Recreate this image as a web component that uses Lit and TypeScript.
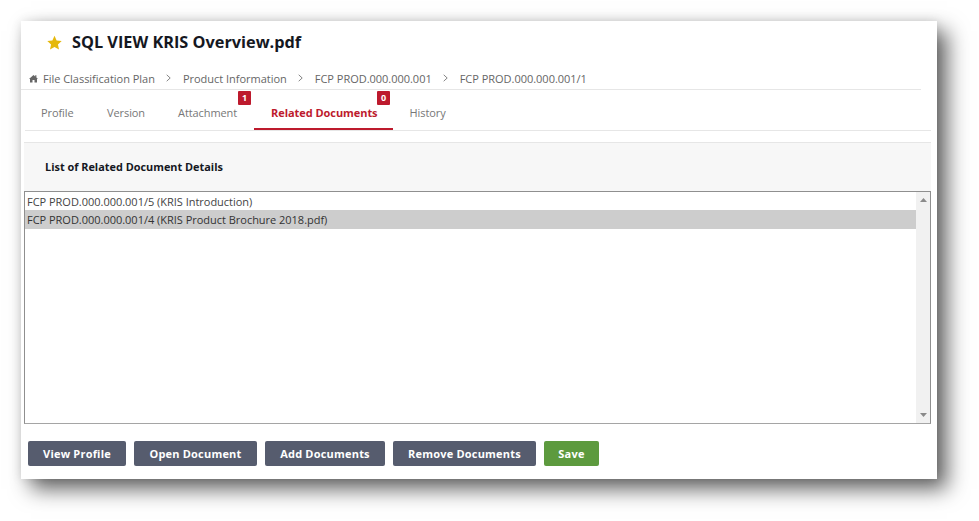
import { LitElement, html, css } from "lit";
import { customElement } from "lit/decorators.js";

@customElement("app-root")
export class AppRoot extends LitElement {
  static styles = css`
    :host { display: block; width: 979px; height: 521px; padding: 21px 0 0 21px; box-sizing: border-box; background: #fff; font-family: "Open Sans", "Noto Sans", sans-serif; overflow: hidden; }
    .card { width: 916px; height: 458px; background: #fff; box-shadow: 10px 10px 20px rgba(0,0,0,.62), 0 0 10px rgba(0,0,0,.1); display: flex; flex-direction: column; }
    .title { display: flex; align-items: center; height: 42px; padding-left: 26px; gap: 10px; }
    .star { width: 15px; height: 15px; display: block; margin-top: 1px; }
    h1 { margin: 0; font-size: 16.3px; line-height: 22px; font-weight: 700; color: #15181f; }
    .crumbs { display: flex; align-items: center; height: 27px; box-sizing: border-box; padding: 4px 0 0 8px; width: 900px; border-bottom: 1px solid #e6e6e6; font-size: 11px; letter-spacing: -.02px; color: #666; }
    .home { width: 9px; height: 9px; margin-right: 5px; }
    .sep { width: 5px; height: 8px; margin: 0 12px 0 11px; }
    .tabs { display: flex; margin: 0 0 0 4px; width: 906px; height: 41px; border-bottom: 1px solid #e6e6e6; box-sizing: border-box; font-size: 11px; letter-spacing: -.09px; }
    .tab { position: relative; padding: 15px 16.5px 0; color: #777; line-height: 16px; box-sizing: border-box; height: 40px; }
    .tab.first { padding: 15px 17px 0 16px; }
    .tab.attach { padding-right: 17px; }
    .tab.active { color: #bd1a2d; font-weight: 700; letter-spacing: -.06px; border-bottom: 2px solid #bd1a2d; padding: 15px 15.5px 0 17px; }
    .badge { position: absolute; top: 1px; right: 3px; width: 13px; height: 14px; border-radius: 1px; background: #bd1a2d; color: #fff; font-size: 9px; font-weight: 700; line-height: 14px; text-align: center; letter-spacing: 0; }
    .panel { margin: 11px 6px 0 3px; height: 49px; box-sizing: border-box; background: #f7f7f7; border-top: 1px solid #e6e6e6; padding: 16px 0 0 21px; font-size: 10.9px; line-height: 16px; font-weight: 700; color: #15181f; }
    .list { margin: 0 6px 0 3px; height: 233px; box-sizing: border-box; border: 1px solid #8f8f8f; border-bottom-color: #a5a5a5; padding-top: 1px; display: flex; font-size: 11px; letter-spacing: -.02px; color: #444; }
    .rows { flex: 1; }
    .row { height: 17px; line-height: 18px; padding-left: 2px; }
    .row.sel { height: 18.5px; line-height: 19px; background: #cdcdcd; color: #333; }
    .scroll { width: 14px; margin-top: -1px; background: #f1f1f1; display: flex; flex-direction: column; justify-content: space-between; align-items: center; padding: 6px 0; box-sizing: border-box; }
    .arrow { width: 7px; height: 4px; display: block; }
    .actions { display: flex; gap: 8px; padding: 17px 0 0 7px; }
    button { height: 25px; padding: 0; border: 0; border-radius: 2px; background: #565c6e; color: #fff; font: 700 11px/25px "Open Sans", "Noto Sans", sans-serif; letter-spacing: .2px; }
    button.save { background: #5d9a3e; }
    .w-view { width: 98px; }
    .w-open { width: 123px; }
    .w-add { width: 120px; }
    .w-remove { width: 143px; }
    .w-save { width: 55px; }
  `;

  private sep() {
    return html`<svg class="sep" viewBox="0 0 5 8"><path d="M.7.8 4.2 4 .7 7.2" fill="none" stroke="#777" stroke-width=".9"/></svg>`;
  }

  render() {
    return html`
      <div class="card">
        <div class="title">
          <svg class="star" viewBox="0 0 24 24"><path d="M12 1l3.4 7.6 8.1.9-6 5.6 1.7 8.1L12 19.1 4.8 23.2l1.7-8.1-6-5.6 8.1-.9z" fill="#e5b80b"/></svg>
          <h1>SQL VIEW KRIS Overview.pdf</h1>
        </div>
        <div class="crumbs">
          <svg class="home" viewBox="0 0 9 9"><path d="M4.5 1 6.2 2.5V1.2H7.4V3.6L9 5H8V8.6H5.5V6H3.5V8.6H1V5H0z" fill="#666"/></svg>
          <span>File Classification Plan</span>${this.sep()}
          <span>Product Information</span>${this.sep()}
          <span>FCP PROD.000.000.001</span>${this.sep()}
          <span>FCP PROD.000.000.001/1</span>
        </div>
        <div class="tabs">
          <div class="tab first">Profile</div>
          <div class="tab">Version</div>
          <div class="tab attach">Attachment<span class="badge">1</span></div>
          <div class="tab active">Related Documents<span class="badge">0</span></div>
          <div class="tab">History</div>
        </div>
        <div class="panel">List of Related Document Details</div>
        <div class="list">
          <div class="rows">
            <div class="row">FCP PROD.000.000.001/5 (KRIS Introduction)</div>
            <div class="row sel">FCP PROD.000.000.001/4 (KRIS Product Brochure 2018.pdf)</div>
          </div>
          <div class="scroll">
            <svg class="arrow" viewBox="0 0 7 4"><path d="M3.5 0 7 4H0z" fill="#8a8a8a"/></svg>
            <svg class="arrow" viewBox="0 0 7 4"><path d="M0 0h7L3.5 4z" fill="#8a8a8a"/></svg>
          </div>
        </div>
        <div class="actions">
          <button class="w-view">View Profile</button>
          <button class="w-open">Open Document</button>
          <button class="w-add">Add Documents</button>
          <button class="w-remove">Remove Documents</button>
          <button class="save w-save">Save</button>
        </div>
      </div>
    `;
  }
}
